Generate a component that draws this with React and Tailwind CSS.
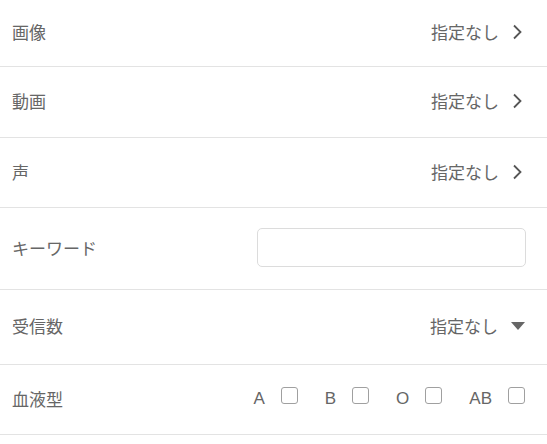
import React from 'react';

const Chevron = () => (
    <svg width="10" height="16" viewBox="0 0 10 16" className="ml-[13px]">
        <path d="M2 1.5 L8.5 8 L2 14.5" fill="none" stroke="#555" strokeWidth="1.8" />
    </svg>
);

const Row = ({ h, pr = 'pr-[25px]', label, children }) => (
    <div className={`${h} flex items-center justify-between border-b border-[#e3e3e3] pl-[12px] pb-[2px] ${pr}`}>
        <span className="text-[17px] text-[#666]">{label}</span>
        {children}
    </div>
);

const Box = () => <span className="block w-[17px] h-[17px] border border-[#a0a0a0] rounded-[3px] bg-white" />;

export default function App() {
    const types = ['A', 'B', 'O', 'AB'];
    return (
        <div className="w-[547px] h-[444px] bg-white" style={{ fontFamily: '"Noto Sans CJK JP", "Noto Sans", sans-serif' }}>
            <Row h="h-[67px]" label="画像">
                <div className="flex items-center text-[17px] text-[#666]">指定なし<Chevron /></div>
            </Row>
            <Row h="h-[71px]" label="動画">
                <div className="flex items-center text-[17px] text-[#666]">指定なし<Chevron /></div>
            </Row>
            <Row h="h-[70px]" label="声">
                <div className="flex items-center text-[17px] text-[#666]">指定なし<Chevron /></div>
            </Row>
            <Row h="h-[82px]" pr="pr-[21px]" label="キーワード">
                <input className="w-[269px] h-[39px] border border-[#dcdcdc] rounded-[5px] outline-none" />
            </Row>
            <Row h="h-[75px]" pr="pr-[22px]" label="受信数">
                <div className="flex items-center text-[17px] text-[#666]">
                    指定なし
                    <svg width="14" height="9" viewBox="0 0 14 9" className="ml-[13px]">
                        <path d="M0 0 L14 0 L7 8 Z" fill="#666" />
                    </svg>
                </div>
            </Row>
            <Row h="h-[70px]" pr="pr-[22px]" label="血液型">
                <div className="flex items-center text-[17px] text-[#666]" style={{ fontFamily: '"Liberation Sans", sans-serif' }}>
                    {types.map((t, i) => (
                        <div key={t} className={`flex items-center ${i > 0 ? 'ml-[27px]' : ''}`}>
                            <span>{t}</span>
                            <span className="ml-[16px] mb-[6px]"><Box /></span>
                        </div>
                    ))}
                </div>
            </Row>
        </div>
    );
}
